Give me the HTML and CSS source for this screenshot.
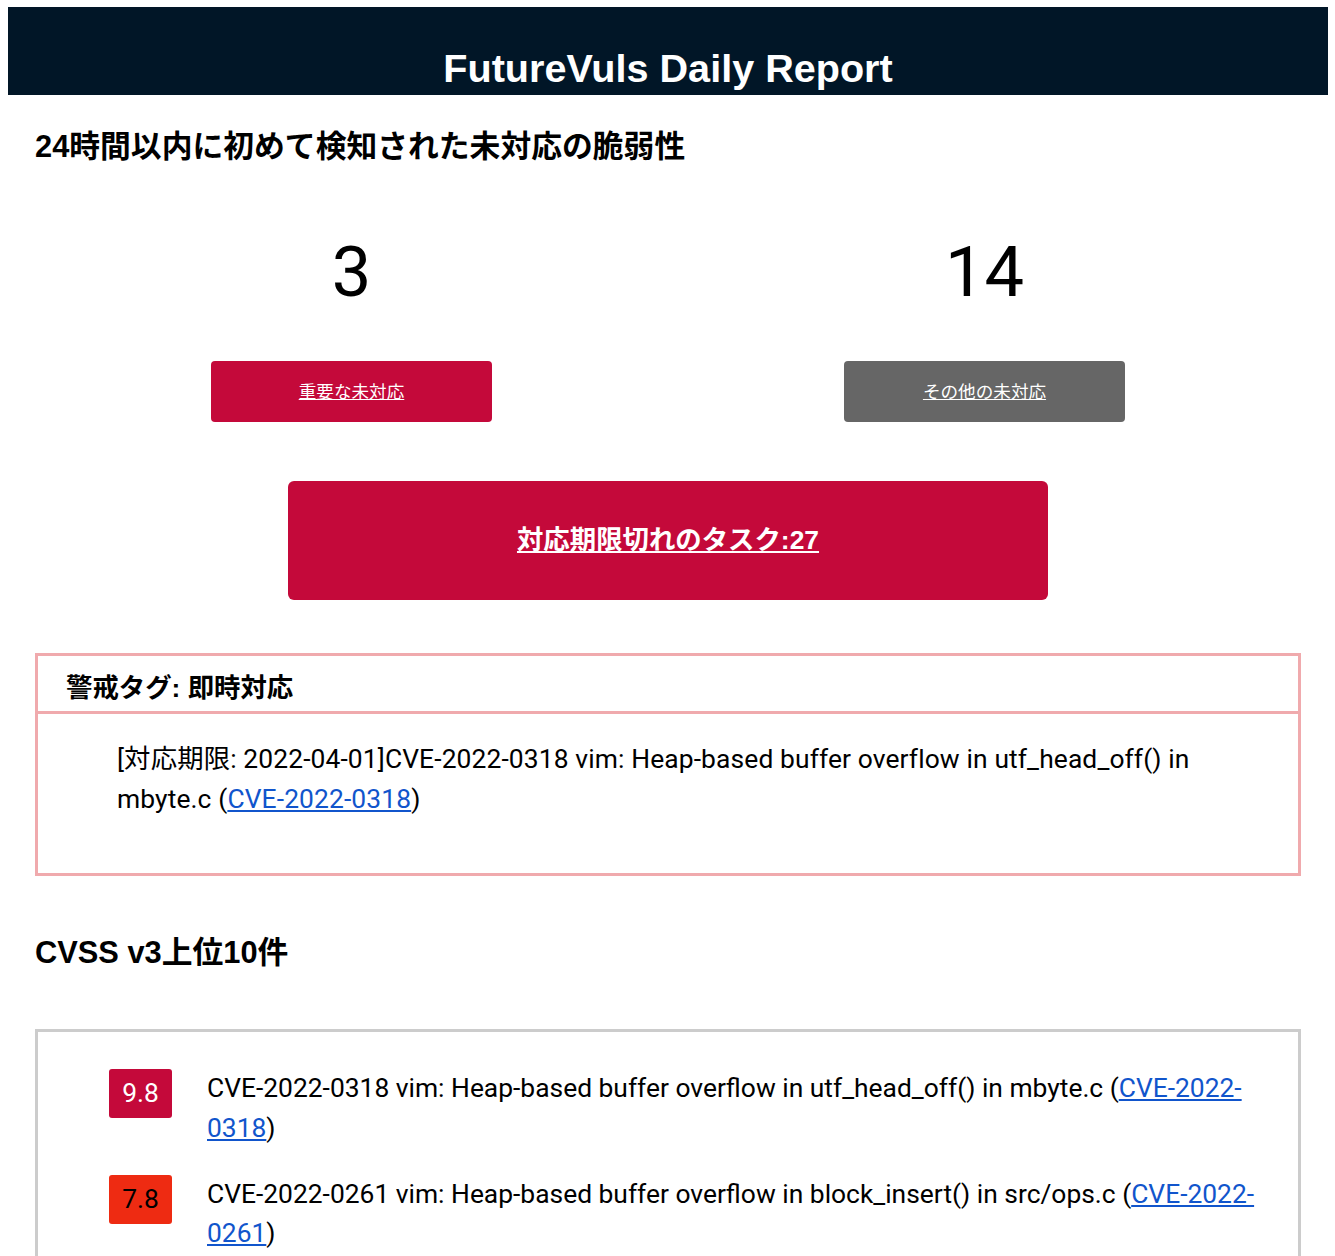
FILE: index.html
```html
<!DOCTYPE html>
<html>
<head>
  <meta charset="UTF-8" />
  <link rel="stylesheet" href="styles.css">
</head>
<body>
  <div class="header">
    <h1 class="title">FutureVuls Daily Report</h1>
  </div>

  <div class="content">
    <h2 class="section-title">24時間以内に初めて検知された未対応の脆弱性</h2>

    <div class="stats">
      <div class="stat">
        <div class="stat-count">3</div>
        <a href="#" class="stat-button critical">重要な未対応</a>
      </div>
      <div class="stat">
        <div class="stat-count">14</div>
        <a href="#" class="stat-button other">その他の未対応</a>
      </div>
    </div>

    <a href="#" class="overdue-button">対応期限切れのタスク:27</a>

    <div class="alert-box">
      <div class="alert-header">警戒タグ: 即時対応</div>
      <ul class="alert-list">
        <li>[対応期限: 2022-04-01]CVE-2022-0318 vim: Heap-based buffer overflow in utf_head_off() in mbyte.c (<a href="#" class="link">CVE-2022-0318</a>)</li>
      </ul>
    </div>

    <h2 class="section-title cvss-title">CVSS v3上位10件</h2>

    <div class="cvss-box">
      <ul class="cvss-list">
        <li class="cvss-item">
          <span class="score critical">9.8</span>
          <span class="cvss-text">CVE-2022-0318 vim: Heap-based buffer overflow in utf_head_off() in mbyte.c (<a href="#" class="link">CVE-2022-0318</a>)</span>
        </li>
        <li class="cvss-item">
          <span class="score high">7.8</span>
          <span class="cvss-text">CVE-2022-0261 vim: Heap-based buffer overflow in block_insert() in src/ops.c (<a href="#" class="link">CVE-2022-0261</a>)</span>
        </li>
      </ul>
    </div>
  </div>
</body>
</html>
```

FILE: styles.css
```css
:root {
  --header-color: #011627;
  --critical-color: #c4093a;
  --high-color: #ee2b12;
  --other-color: #666666;
  --alert-border: #f0aaad;
  --box-border: #cccccc;
  --link-color: #1155cc;
  --heading-font: 'Liberation Sans', Arial, 'Noto Sans CJK JP', sans-serif;
}

body {
  margin: 7px 7px 8px 8px;
  font-family: Roboto, 'Noto Sans CJK JP', sans-serif;
  font-size: 26.4px;
  line-height: 1.5;
  color: #000;
  background: #fff;
}

.header {
  height: 88px;
  box-sizing: border-box;
  padding-top: 42px;
  background: var(--header-color);
  text-align: center;
}

.title {
  margin: 0;
  font-family: var(--heading-font);
  font-size: 39.6px;
  font-weight: bold;
  line-height: 1;
  color: #fff;
}

.content {
  padding: 0 27px;
}

.section-title {
  margin: 34px 0 0;
  font-family: var(--heading-font);
  font-size: 30.8px;
  font-weight: bold;
  line-height: 1.2;
}

.cvss-title {
  margin-top: 59px;
}

.stats {
  display: grid;
  grid-template-columns: 1fr 1fr;
  margin-top: 71px;
  text-align: center;
}

.stat-count {
  font-size: 70.4px;
  line-height: 1;
}

.stat-button {
  display: block;
  width: 281px;
  height: 61px;
  margin: 54px auto 0;
  border-radius: 4px;
  font-family: 'Noto Sans CJK JP', sans-serif;
  font-size: 17.6px;
  line-height: 60px;
  color: #fff;
}

.stat-button.critical {
  background: var(--critical-color);
}

.stat-button.other {
  background: var(--other-color);
}

.overdue-button {
  display: block;
  width: 760px;
  margin: 59px auto 0;
  padding: 40px 0;
  border-radius: 6px;
  background: var(--critical-color);
  font-family: var(--heading-font);
  font-size: 26.4px;
  font-weight: bold;
  line-height: 39px;
  color: #fff;
  text-align: center;
}

.alert-box {
  margin-top: 53px;
  border: 3px solid var(--alert-border);
}

.alert-header {
  padding: 13px 28px 2px;
  border-bottom: 3px solid var(--alert-border);
  font-family: var(--heading-font);
  font-size: 26.4px;
  font-weight: bold;
}

.alert-list {
  margin: 0;
  padding: 26px 26px 54px 79px;
  list-style: none;
}

.alert-list li {
  letter-spacing: 0.12px;
}

.link {
  color: var(--link-color);
}

.cvss-box {
  margin-top: 57px;
  padding: 37px 26px 36px 71px;
  border: 3px solid var(--box-border);
}

.cvss-list {
  margin: 0;
  padding: 0;
  list-style: none;
}

.cvss-item {
  display: flex;
  align-items: flex-start;
  gap: 35px;
  margin-bottom: 26.4px;
}

.score {
  flex: none;
  width: 63px;
  height: 49px;
  border-radius: 3px;
  line-height: 49px;
  text-align: center;
}

.score.critical {
  background: var(--critical-color);
  color: #fff;
}

.score.high {
  background: var(--high-color);
  color: #000;
}
```
